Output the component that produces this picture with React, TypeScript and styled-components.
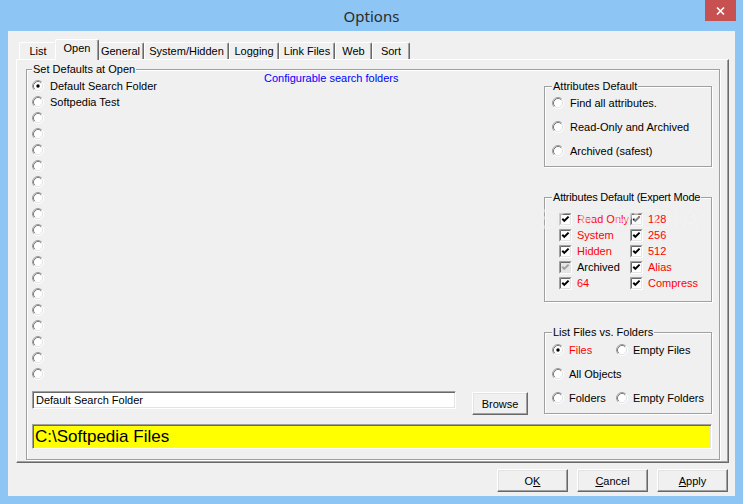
import styled, { createGlobalStyle } from "styled-components";

const GlobalStyle = createGlobalStyle`
  html, body {
    margin: 0;
    padding: 0;
  }
  body {
    background: #8dc5f4;
    font-family: "Liberation Sans", Arial, sans-serif;
  }
`;

const tabs = [
  { label: "List", w: 38 },
  { label: "Open", w: 40, active: true },
  { label: "General", w: 47 },
  { label: "System/Hidden", w: 85 },
  { label: "Logging", w: 50 },
  { label: "Link Files", w: 56 },
  { label: "Web", w: 37 },
  { label: "Sort", w: 38 },
];

const folders = ["Default Search Folder", "Softpedia Test", ...Array(17).fill("")];

const expert = [
  [
    { label: "Read Only", red: true },
    { label: "128", red: true },
  ],
  [
    { label: "System", red: true },
    { label: "256", red: true },
  ],
  [
    { label: "Hidden", red: true },
    { label: "512", red: true },
  ],
  [
    { label: "Archived", red: false, disabled: true },
    { label: "Alias", red: true },
  ],
  [
    { label: "64", red: true },
    { label: "Compress", red: true },
  ],
];

const Radio = ({ checked }: { checked?: boolean }) => (
  <svg width="12" height="12" viewBox="0 0 12 12">
    <circle cx="6" cy="6" r="5" fill="#fff" />
    <path d="M2.11 9.89A5.5 5.5 0 0 1 9.89 2.11" stroke="#a0a0a0" fill="none" />
    <path d="M9.89 2.11A5.5 5.5 0 0 1 2.11 9.89" stroke="#fff" fill="none" />
    <path d="M2.82 9.18A4.5 4.5 0 0 1 9.18 2.82" stroke="#787878" fill="none" />
    <path d="M9.18 2.82A4.5 4.5 0 0 1 2.82 9.18" stroke="#e3e3e3" fill="none" />
    {checked && <circle cx="6" cy="6" r="1.7" fill="#000" />}
  </svg>
);

const CheckBox = ({ disabled }: { disabled?: boolean }) => (
  <svg width="13" height="13" viewBox="0 0 13 13">
    <rect x="1" y="1" width="11" height="11" fill={disabled ? "#e6e6e6" : "#fff"} />
    <path d="M0.5 12.5V0.5H12.5" stroke="#a0a0a0" fill="none" />
    <path d="M1.5 11.5V1.5H11.5" stroke="#696969" fill="none" />
    <path d="M0.5 12.5H12.5V0.5" stroke="#fff" fill="none" />
    <path d="M1.5 11.5H11.5V1.5" stroke="#e3e3e3" fill="none" />
    <path
      d="M3.3 5.8L5.3 7.9L9.6 3.6"
      stroke={disabled ? "#a0a0a0" : "#000"}
      strokeWidth="2"
      fill="none"
    />
  </svg>
);

const Options = () => {
  return (
    <Window>
      <TitleBar>
        <span />
        <Title>Options</Title>
        <CloseButton aria-label="Close">
          <svg width="9" height="8" viewBox="0 0 9 8">
            <path d="M1 0.5L8 7.5M8 0.5L1 7.5" stroke="#fff" strokeWidth="1.6" />
          </svg>
        </CloseButton>
      </TitleBar>

      <Client>
        <TabStrip>
          {tabs.map((t) => (
            <Tab key={t.label} $w={t.w} $active={!!t.active}>
              {t.label}
            </Tab>
          ))}
        </TabStrip>

        <TabPanel>
          <Group $pad="0 7px 10px 5px">
            <Legend>Set Defaults at Open</Legend>
            <MainRow>
              <LeftCol>
                <ListRow>
                  <RadioList>
                    {folders.map((f, i) => (
                      <OptionRow key={i}>
                        <Radio checked={i === 0} />
                        {f}
                      </OptionRow>
                    ))}
                  </RadioList>
                  <Hint>Configurable search folders</Hint>
                </ListRow>
                <FieldRow>
                  <TextField>Default Search Folder</TextField>
                  <Button $w={56}>Browse</Button>
                </FieldRow>
              </LeftCol>

              <RightCol>
                <Group $pad="2px 6px 7px 7px">
                  <Legend>Attributes Default</Legend>
                  <Stack>
                    <OptionRow>
                      <Radio />
                      Find all attributes.
                    </OptionRow>
                    <OptionRow>
                      <Radio />
                      Read-Only and Archived
                    </OptionRow>
                    <OptionRow>
                      <Radio />
                      Archived (safest)
                    </OptionRow>
                  </Stack>
                </Group>

                <Group $pad="7px 0 10px 7px">
                  <Legend $tight>Attributes Default (Expert Mode</Legend>
                  <CheckGrid>
                    {expert.flat().map((c) => (
                      <OptionRow key={c.label} $color={c.red ? "#ff0000" : "#000"}>
                        <CheckBox disabled={c.disabled} />
                        {c.label}
                      </OptionRow>
                    ))}
                  </CheckGrid>
                </Group>

                <Group $pad="3px 6px 7px 7px">
                  <Legend>List Files vs. Folders</Legend>
                  <ChoiceGrid>
                    <OptionRow $color="#ff0000">
                      <Radio checked />
                      Files
                    </OptionRow>
                    <OptionRow>
                      <Radio />
                      Empty Files
                    </OptionRow>
                    <OptionRow>
                      <Radio />
                      All Objects
                    </OptionRow>
                    <span />
                    <OptionRow>
                      <Radio />
                      Folders
                    </OptionRow>
                    <OptionRow>
                      <Radio />
                      Empty Folders
                    </OptionRow>
                  </ChoiceGrid>
                </Group>
              </RightCol>
            </MainRow>

            <PathBar>C:\Softpedia Files</PathBar>
          </Group>
        </TabPanel>

        <ButtonRow>
          <Button $w={71}>
            O<u>K</u>
          </Button>
          <Button $w={71}>
            <u>C</u>ancel
          </Button>
          <Button $w={71}>
            <u>A</u>pply
          </Button>
        </ButtonRow>
      </Client>

      <Watermark>
        SOFTPEDIA<sup>®</sup>
      </Watermark>
    </Window>
  );
};

const Window = styled.div`
  position: relative;
  width: 743px;
  height: 504px;
  display: flex;
  flex-direction: column;
  background: #8dc5f4;
  overflow: hidden;
`;

const TitleBar = styled.div`
  height: 31px;
  display: grid;
  grid-template-columns: 1fr auto 1fr;
  align-items: center;
`;

const Title = styled.div`
  font-family: "Noto Sans", "Open Sans", sans-serif;
  font-size: 15px;
  color: #2b2b2b;
  margin-top: 1px;
`;

const CloseButton = styled.div`
  justify-self: end;
  align-self: start;
  width: 31px;
  height: 21px;
  margin-right: 7px;
  background: #c75050;
  display: flex;
  align-items: center;
  justify-content: center;
`;

const Client = styled.div`
  margin: 0 8px 8px;
  flex: 1;
  background: #f0f0f0;
  padding: 8px 6px 3px 8px;
  display: flex;
  flex-direction: column;
  font-size: 11px;
  color: #000;
`;

const TabStrip = styled.div`
  height: 20px;
  display: flex;
  align-items: flex-end;
  padding-left: 3px;
`;

const Tab = styled.div<{ $w: number; $active: boolean }>`
  position: relative;
  z-index: ${(p) => (p.$active ? 2 : 1)};
  box-sizing: border-box;
  width: ${(p) => p.$w + (p.$active ? 4 : 0)}px;
  height: ${(p) => (p.$active ? 21 : 17)}px;
  margin: 0 ${(p) => (p.$active ? -2 : 0)}px ${(p) => (p.$active ? -1 : 0)}px;
  padding-bottom: ${(p) => (p.$active ? 3 : 0)}px;
  padding-top: ${(p) => (p.$active ? 0 : 1)}px;
  background: #f0f0f0;
  border-top: 1px solid #fff;
  border-left: 1px solid #fff;
  border-right: 1px solid #696969;
  border-radius: 2px 2px 0 0;
  box-shadow: inset -1px 0 0 #a0a0a0;
  display: flex;
  align-items: center;
  justify-content: center;
  font-size: 11px;
  line-height: 13px;
  white-space: nowrap;
`;

const TabPanel = styled.div`
  box-sizing: border-box;
  height: 404px;
  border-style: solid;
  border-width: 1px;
  border-color: #fff #696969 #696969 #fff;
  box-shadow: inset -1px -1px 0 #a0a0a0;
  padding: 3px 8px 2px 9px;
`;

const Group = styled.fieldset<{ $pad: string }>`
  margin: 0;
  min-width: 0;
  padding: ${(p) => p.$pad};
  border: 1px solid #a0a0a0;
  box-shadow: 1px 1px 0 #fff, inset 1px 1px 0 #fff;
`;

const Legend = styled.legend<{ $tight?: boolean }>`
  padding: 0 1px;
  font-size: 11px;
  line-height: 13px;
  letter-spacing: ${(p) => (p.$tight ? "-0.2px" : "0")};
  background: #f0f0f0;
  white-space: nowrap;
`;

const MainRow = styled.div`
  display: flex;
  gap: 16px;
`;

const LeftCol = styled.div`
  flex: 1;
  display: flex;
  flex-direction: column;
`;

const ListRow = styled.div`
  display: flex;
  align-items: flex-start;
`;

const RadioList = styled.div`
  width: 232px;
  margin-top: 2px;
  display: flex;
  flex-direction: column;
`;

const Hint = styled.div`
  margin-top: -4px;
  color: #0000ff;
  font-size: 11px;
  line-height: 13px;
  white-space: nowrap;
`;

const OptionRow = styled.div<{ $color?: string }>`
  height: 16px;
  display: flex;
  align-items: center;
  gap: 6px;
  color: ${(p) => p.$color ?? "#000"};
  font-size: 11px;
  white-space: nowrap;
  svg {
    flex-shrink: 0;
  }
`;

const FieldRow = styled.div`
  margin-top: 9px;
  display: flex;
  align-items: flex-start;
  gap: 16px;
`;

const TextField = styled.div`
  flex: 1;
  box-sizing: border-box;
  height: 18px;
  background: #fff;
  border-style: solid;
  border-width: 1px;
  border-color: #a0a0a0 #fff #fff #a0a0a0;
  box-shadow: inset 1px 1px 0 #696969, inset -1px -1px 0 #e3e3e3;
  padding: 0 3px;
  display: flex;
  align-items: center;
  font-size: 11px;
`;

const Button = styled.div<{ $w: number }>`
  box-sizing: border-box;
  width: ${(p) => p.$w}px;
  height: 23px;
  margin-top: 1px;
  background: #f0f0f0;
  border-style: solid;
  border-width: 1px;
  border-color: #fff #696969 #696969 #fff;
  box-shadow: inset -1px -1px 0 #a0a0a0, inset 1px 1px 0 #e3e3e3;
  display: flex;
  align-items: center;
  justify-content: center;
  font-size: 11px;
  u {
    text-decoration-thickness: 1px;
    text-underline-offset: 1px;
  }
`;

const RightCol = styled.div`
  width: 168px;
  margin-top: 4px;
  display: flex;
  flex-direction: column;
  gap: 24px;
`;

const Stack = styled.div`
  display: flex;
  flex-direction: column;
  gap: 8px;
`;

const CheckGrid = styled.div`
  display: grid;
  grid-template-columns: 71px 1fr;
  grid-auto-rows: 16px;
  padding-left: 7px;
  ${OptionRow} {
    gap: 5px;
  }
`;

const ChoiceGrid = styled.div`
  display: grid;
  grid-template-columns: 64px 1fr;
  row-gap: 8px;
  ${OptionRow} {
    gap: 5px;
  }
`;

const PathBar = styled.div`
  margin-top: 9px;
  box-sizing: border-box;
  height: 25px;
  background: #ffff00;
  border-style: solid;
  border-width: 1px;
  border-color: #a0a0a0 #fff #fff #a0a0a0;
  box-shadow: inset 1px 1px 0 #696969, inset -1px -1px 0 #e3e3e3;
  padding: 0 2px;
  display: flex;
  align-items: center;
  font-size: 17px;
`;

const ButtonRow = styled.div`
  margin-top: 6px;
  display: flex;
  justify-content: flex-end;
  gap: 9px;
  padding-right: 1px;
  ${Button} {
    margin-top: 0;
  }
`;

const Watermark = styled.div`
  position: absolute;
  left: 537px;
  top: 204px;
  font-family: "Liberation Sans", Arial, sans-serif;
  font-weight: bold;
  font-size: 30px;
  line-height: 30px;
  letter-spacing: -1px;
  color: rgba(255, 255, 255, 0.5);
  text-shadow: 0 0 1px rgba(0, 0, 0, 0.05);
  pointer-events: none;
  sup {
    font-size: 9px;
    vertical-align: top;
    margin-left: 2px;
    line-height: 12px;
  }
`;

export default function App() {
  return (
    <>
      <GlobalStyle />
      <Options />
    </>
  );
}
